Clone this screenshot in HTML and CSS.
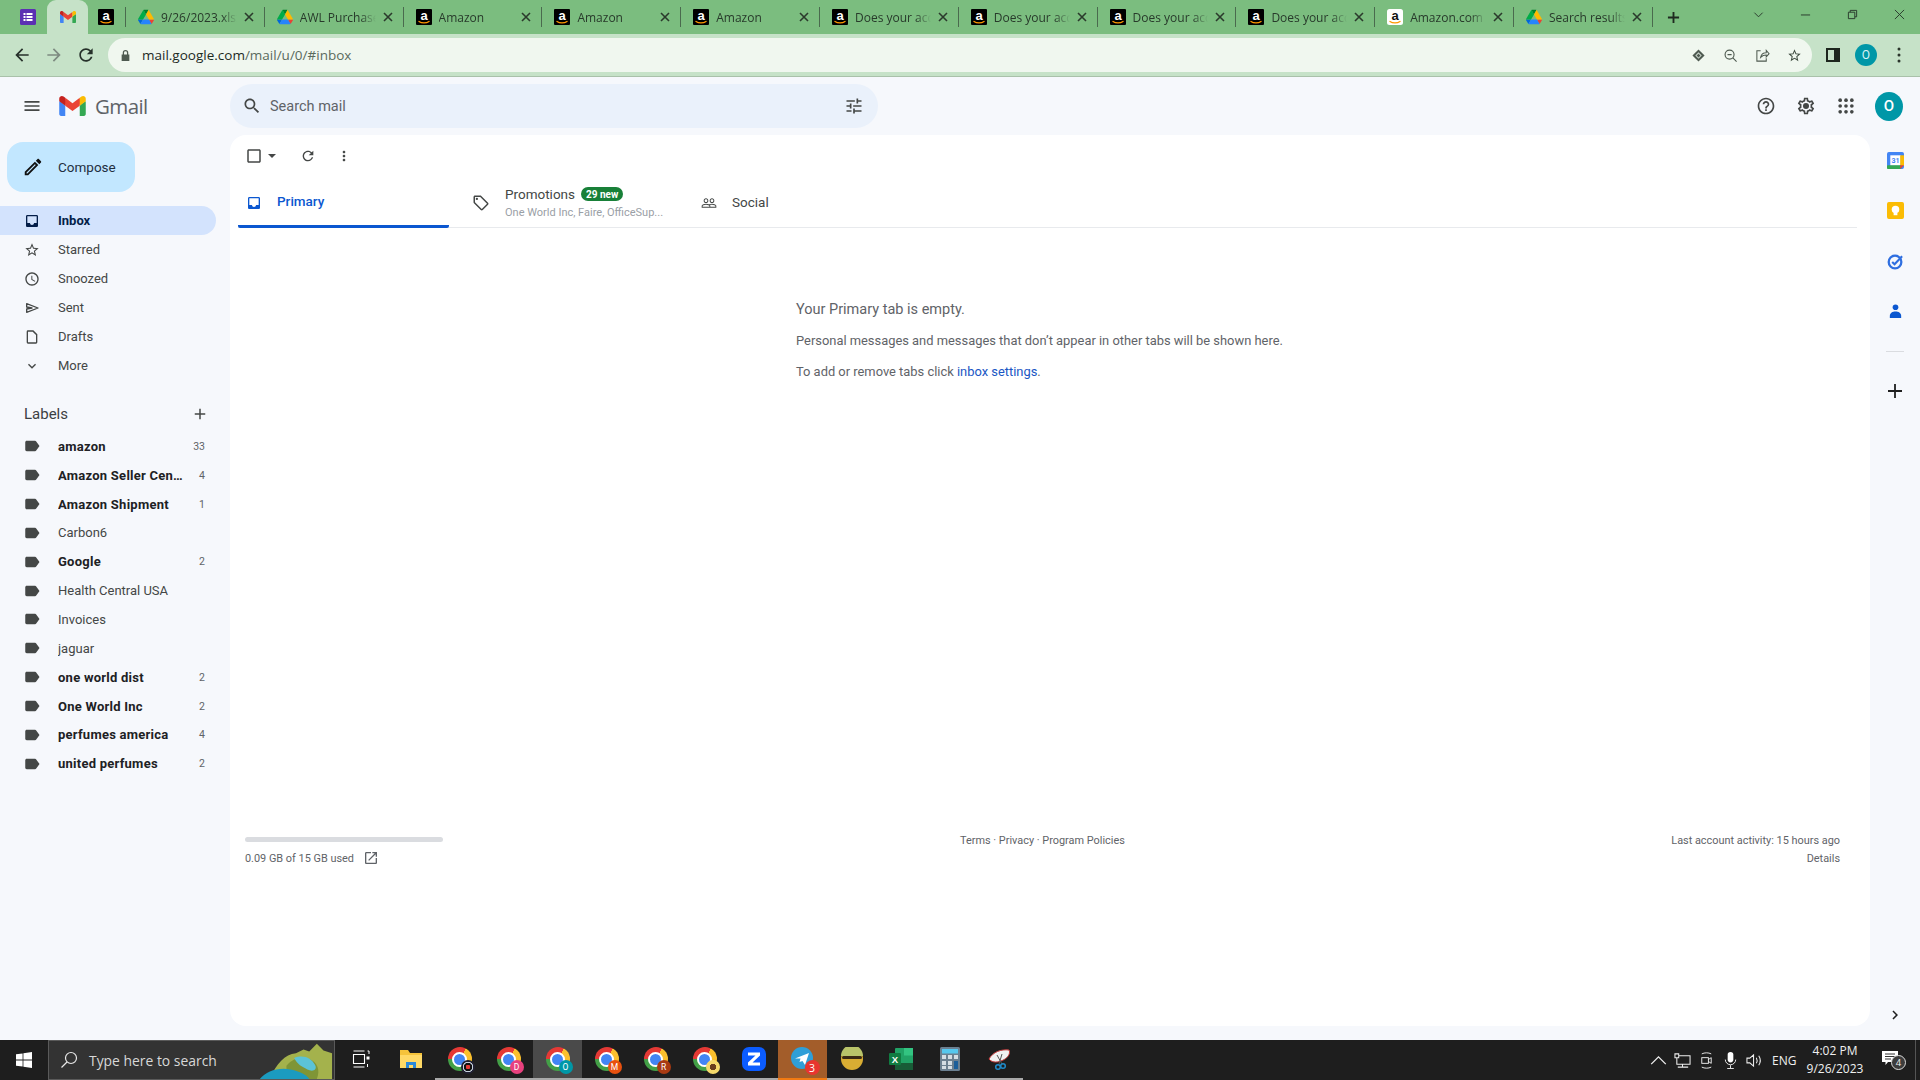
FILE: index.html
```html
<!DOCTYPE html>
<html lang="en">
<head>
<meta charset="utf-8">
<title>Inbox - Gmail</title>
<link rel="stylesheet" href="styles.css">
</head>
<body>
<svg class="defs" width="0" height="0" aria-hidden="true">
  <symbol id="amazon" viewBox="0 0 16 16"><rect width="16" height="16" rx="1" fill="#000"/><text x="8" y="10.5" text-anchor="middle" font-family="Liberation Sans, sans-serif" font-weight="700" font-size="13" fill="#fff">a</text><path d="M2.5 12.2c3.5 2.2 7.5 2.2 11 0" fill="none" stroke="#f90" stroke-width="1.3"/></symbol>
  <symbol id="amazonw" viewBox="0 0 16 16"><rect width="16" height="16" rx="2.5" fill="#fff"/><text x="8" y="10.5" text-anchor="middle" font-family="Liberation Sans, sans-serif" font-weight="700" font-size="13" fill="#111">a</text><path d="M2.5 12.2c3.5 2.2 7.5 2.2 11 0" fill="none" stroke="#f90" stroke-width="1.3"/></symbol>
  <symbol id="drive" viewBox="0 0 87.3 78"><path d="M6.6 66.85l3.85 6.65c.8 1.4 1.95 2.5 3.3 3.3L27.5 53H0c0 1.55.4 3.1 1.2 4.5z" fill="#0066da"/><path d="M43.65 25L29.9 1.2c-1.35.8-2.5 1.9-3.3 3.3L1.2 48.5C.4 49.9 0 51.45 0 53h27.5z" fill="#00ac47"/><path d="M73.55 76.8c1.35-.8 2.5-1.9 3.3-3.3l1.6-2.75 7.65-13.25c.8-1.4 1.2-2.95 1.2-4.5H59.798l5.852 11.5z" fill="#ea4335"/><path d="M43.65 25L57.4 1.2C56.05.4 54.5 0 52.9 0H34.4c-1.6 0-3.15.45-4.5 1.2z" fill="#00832d"/><path d="M59.8 53H27.5L13.75 76.8c1.35.8 2.9 1.2 4.5 1.2h50.8c1.6 0 3.15-.45 4.5-1.2z" fill="#2684fc"/><path d="M73.4 26.5l-12.7-22c-.8-1.4-1.95-2.5-3.3-3.3L43.65 25 59.8 53h27.45c0-1.55-.4-3.1-1.2-4.5z" fill="#ffba00"/></symbol>
  <symbol id="gmail" viewBox="0 0 256 193"><path d="M58.18 192.05V93.14L27.5 65.08 0 49.5v125.09c0 9.66 7.83 17.46 17.46 17.46h40.72z" fill="#4285F4"/><path d="M197.82 192.05h40.72c9.66 0 17.46-7.83 17.46-17.46V49.5l-31.15 17.83-27.03 25.81v98.91z" fill="#34A853"/><path d="M58.18 93.14l-4.17-38.65 4.17-36.99L128 69.87l69.82-52.37 4.67 35-4.67 40.64L128 145.5z" fill="#EA4335"/><path d="M197.82 17.5v75.64L256 49.5V26.23c0-21.58-24.64-33.88-41.89-20.94z" fill="#FBBC04"/><path d="M0 49.5l26.76 20.07L58.18 93.14V17.5L41.89 5.29C24.61-7.65 0 4.65 0 26.23z" fill="#C5221F"/></symbol>
  <symbol id="close" viewBox="0 0 10 10"><path d="M1 1l8 8M9 1L1 9" stroke="#2b3a2c" stroke-width="1.6" fill="none"/></symbol>
  <symbol id="label" viewBox="0 0 24 24"><path d="M17.63 5.84C17.27 5.33 16.67 5 16 5L5 5.01C3.9 5.01 3 5.9 3 7v10c0 1.1.9 1.99 2 1.99L16 19c.67 0 1.27-.33 1.63-.84L22 12l-4.37-6.16z"/></symbol>
  <symbol id="inbox" viewBox="0 0 24 24"><path d="M19 3H4.99c-1.11 0-1.98.89-1.98 2L3 19c0 1.1.88 2 1.99 2H19c1.1 0 2-.9 2-2V5c0-1.11-.9-2-2-2zm0 12h-4c0 1.66-1.35 3-3 3s-3-1.34-3-3H4.99V5H19v10z"/></symbol>
</svg>

<div class="tabstrip">
  <svg class="fav" viewBox="0 0 16 16"><rect width="16" height="16" rx="1.5" fill="#5b2fb3"/><path d="M3.5 4h2v2h-2zM3.5 7h2v2h-2zM3.5 10h2v2h-2zM6.5 4h6v2h-6zM6.5 7h6v2h-6zM6.5 10h6v2h-6z" fill="#fff"/></svg>
  <div class="tab-active"><svg class="fav" viewBox="0 0 256 193"><use href="#gmail"/></svg></div>
  <svg class="fav pinned"><use href="#amazon"/></svg>
  <div class="sep"></div>
  <div class="tab"><svg class="fav"><use href="#drive"/></svg><span class="tab-title">9/26/2023.xlsx</span><svg class="tab-x"><use href="#close"/></svg></div>
  <div class="tab"><svg class="fav"><use href="#drive"/></svg><span class="tab-title">AWL Purchase</span><svg class="tab-x"><use href="#close"/></svg></div>
  <div class="tab"><svg class="fav"><use href="#amazon"/></svg><span class="tab-title">Amazon</span><svg class="tab-x"><use href="#close"/></svg></div>
  <div class="tab"><svg class="fav"><use href="#amazon"/></svg><span class="tab-title">Amazon</span><svg class="tab-x"><use href="#close"/></svg></div>
  <div class="tab"><svg class="fav"><use href="#amazon"/></svg><span class="tab-title">Amazon</span><svg class="tab-x"><use href="#close"/></svg></div>
  <div class="tab"><svg class="fav"><use href="#amazon"/></svg><span class="tab-title">Does your account</span><svg class="tab-x"><use href="#close"/></svg></div>
  <div class="tab"><svg class="fav"><use href="#amazon"/></svg><span class="tab-title">Does your account</span><svg class="tab-x"><use href="#close"/></svg></div>
  <div class="tab"><svg class="fav"><use href="#amazon"/></svg><span class="tab-title">Does your account</span><svg class="tab-x"><use href="#close"/></svg></div>
  <div class="tab"><svg class="fav"><use href="#amazon"/></svg><span class="tab-title">Does your account</span><svg class="tab-x"><use href="#close"/></svg></div>
  <div class="tab"><svg class="fav"><use href="#amazonw"/></svg><span class="tab-title">Amazon.com : shop</span><svg class="tab-x"><use href="#close"/></svg></div>
  <div class="tab"><svg class="fav"><use href="#drive"/></svg><span class="tab-title">Search results</span><svg class="tab-x"><use href="#close"/></svg></div>
  <svg class="newtab" viewBox="0 0 14 14"><path d="M7 1v12M1 7h12" stroke="#1f2a20" stroke-width="2"/></svg>
  <div class="winctl">
    <svg class="win-ic" viewBox="0 0 12 12"><path d="M1.5 4L6 8.5 10.5 4" fill="none" stroke="#26342a" stroke-width="1"/></svg>
    <svg class="win-ic" viewBox="0 0 12 12"><path d="M1 6.5h10" stroke="#26342a" stroke-width="1"/></svg>
    <svg class="win-ic" viewBox="0 0 12 12"><path d="M1.5 3.5h7v7h-7zM3.5 3.5v-2h7v7h-2" fill="none" stroke="#26342a" stroke-width="1"/></svg>
    <svg class="win-ic" viewBox="0 0 12 12"><path d="M1 1l10 10M11 1L1 11" stroke="#26342a" stroke-width="1"/></svg>
  </div>
</div>

<div class="toolbar">
  <svg class="nav-ic" viewBox="0 0 24 24"><path d="M20 11H7.83l5.59-5.59L12 4l-8 8 8 8 1.41-1.41L7.83 13H20z" fill="#26302a"/></svg>
  <svg class="nav-ic" viewBox="0 0 24 24"><path d="M12 4l-1.41 1.41L16.17 11H4v2h12.17l-5.58 5.59L12 20l8-8z" fill="#7d8a80"/></svg>
  <svg class="nav-ic" viewBox="0 0 24 24"><path d="M17.65 6.35C16.2 4.9 14.21 4 12 4c-4.42 0-7.99 3.58-7.99 8s3.57 8 7.99 8c3.73 0 6.84-2.55 7.73-6h-2.08c-.82 2.33-3.04 4-5.65 4-3.31 0-6-2.69-6-6s2.69-6 6-6c1.66 0 3.14.69 4.22 1.78L13 11h7V4l-2.35 2.35z" fill="#26302a"/></svg>
  <div class="omnibox">
    <svg class="lock" viewBox="0 0 12 14"><path d="M3 6V4a3 3 0 0 1 6 0v2h1.2v7H1.8V6zm1.4 0h3.2V4a1.6 1.6 0 0 0-3.2 0z" fill="#4e5a50"/></svg>
    <span class="url"><span class="url-host">mail.google.com</span>/mail/u/0/#inbox</span>
    <div class="omni-actions">
      <svg class="omni-ic" viewBox="0 0 16 16"><path d="M8 1.500L14.500 8 8 14.500 1.500 8z" fill="#4e5a50"/><path d="M8 4.500L11.500 8 8 11.500 4.500 8z" fill="#c9d3ca"/><path d="M8 6l2 2-2 2-2-2z" fill="#4e5a50"/></svg>
      <svg class="omni-ic" viewBox="0 0 16 16"><circle cx="7" cy="7" r="4.8" fill="none" stroke="#4e5a50" stroke-width="1.2"/><path d="M10.5 10.5L14.5 14.5M4.8 7h4.4" stroke="#4e5a50" stroke-width="1.2"/></svg>
      <svg class="omni-ic" viewBox="0 0 16 16"><path d="M6 3H2v11h10v-3M6 10c.5-3 3-5 6-5V2.5L15 6l-3 3.500V7.500c-2.500 0-4.500 1-6 2.500z" fill="none" stroke="#4e5a50" stroke-width="1.100"/></svg>
      <svg class="omni-ic" viewBox="0 0 24 24"><path d="M22 9.24l-7.19-.62L12 2 9.19 8.63 2 9.24l5.46 4.73L5.82 21 12 17.27 18.18 21l-1.63-7.03L22 9.24zM12 15.4l-3.760 2.270 1-4.280-3.320-2.880 4.380-.38L12 6.100l1.710 4.040 4.380.38-3.320 2.880 1 4.280L12 15.400z" fill="#3c4a3e"/></svg>
    </div>
  </div>
  <div class="toolbar-end">
    <svg class="panel-ic" viewBox="0 0 14 14"><path d="M0 0h14v14H0zM2 2v10h6V2z" fill="#1d261e"/></svg>
    <div class="chrome-avatar">O</div>
    <svg class="menu-ic" viewBox="0 0 4 16"><circle cx="2" cy="2" r="1.500" fill="#2b352c"/><circle cx="2" cy="8" r="1.500" fill="#2b352c"/><circle cx="2" cy="14" r="1.500" fill="#2b352c"/></svg>
  </div>
</div>

<div class="app">
  <header class="gm-header">
    <div class="gm-brand">
      <svg class="ic20 hamburger" viewBox="0 0 24 24"><path d="M3 18h18v-2H3v2zm0-5h18v-2H3v2zm0-7v2h18V6H3z"/></svg>
      <svg class="gm-logo"><use href="#gmail"/></svg>
      <span class="gm-word">Gmail</span>
    </div>
    <div class="gm-search">
      <svg class="ic20" viewBox="0 0 24 24"><path d="M15.500 14h-.79l-.28-.27C15.410 12.590 16 11.110 16 9.500 16 5.910 13.090 3 9.500 3S3 5.910 3 9.500 5.910 16 9.500 16c1.610 0 3.090-.59 4.230-1.570l.27.28v.79l5 4.990L20.490 19l-4.990-5zm-6 0C7.010 14 5 11.990 5 9.500S7.010 5 9.500 5 14 7.010 14 9.500 11.990 14 9.500 14z"/></svg>
      <span class="gm-search-text">Search mail</span>
      <svg class="ic20 tune" viewBox="0 0 24 24"><path d="M3 17v2h6v-2H3zM3 5v2h10V5H3zm10 16v-2h8v-2h-8v-2h-2v6h2zM7 9v2H3v2h4v2h2V9H7zm14 4v-2H11v2h10zm-6-4h2V7h4V5h-4V3h-2v6z"/></svg>
    </div>
    <div class="gm-actions">
      <svg class="ic20" viewBox="0 0 24 24"><path d="M11 18h2v-2h-2v2zm1-16C6.480 2 2 6.480 2 12s4.480 10 10 10 10-4.480 10-10S17.520 2 12 2zm0 18c-4.410 0-8-3.590-8-8s3.590-8 8-8 8 3.590 8 8-3.590 8-8 8zm0-14c-2.210 0-4 1.790-4 4h2c0-1.100.9-2 2-2s2 .9 2 2c0 2-3 1.750-3 5h2c0-2.250 3-2.500 3-5 0-2.210-1.790-4-4-4z"/></svg>
      <svg class="ic20" viewBox="0 0 24 24"><path d="M19.430 12.980c.04-.32.07-.64.07-.98 0-.34-.03-.66-.07-.98l2.110-1.650c.19-.15.24-.42.12-.64l-2-3.460c-.09-.16-.26-.25-.44-.25-.06 0-.12.01-.17.03l-2.490 1c-.52-.4-1.080-.73-1.690-.98l-.38-2.650C14.460 2.180 14.250 2 14 2h-4c-.25 0-.46.18-.49.42l-.38 2.650c-.61.25-1.170.59-1.690.98l-2.490-1c-.06-.02-.12-.03-.18-.03-.17 0-.34.09-.43.25l-2 3.460c-.13.22-.07.49.12.64l2.110 1.650c-.04.32-.07.65-.07.98 0 .33.03.66.07.98l-2.110 1.650c-.19.15-.24.42-.12.64l2 3.460c.09.16.26.25.44.25.06 0 .12-.01.17-.03l2.490-1c.52.4 1.080.73 1.690.98l.38 2.650c.03.24.24.42.49.42h4c.25 0 .46-.18.49-.42l.38-2.650c.61-.25 1.170-.59 1.690-.98l2.490 1c.06.02.12.03.18.03.17 0 .34-.09.43-.25l2-3.460c.12-.22.07-.49-.12-.64l-2.110-1.650zm-1.980-1.710c.04.31.05.52.05.73 0 .21-.02.43-.05.73l-.14 1.130.89.7 1.080.84-.7 1.210-1.270-.51-1.040-.42-.9.68c-.43.32-.84.56-1.250.73l-1.060.43-.16 1.130-.2 1.350h-1.400l-.19-1.350-.16-1.130-1.060-.43c-.43-.18-.83-.41-1.230-.71l-.91-.7-1.060.43-1.270.51-.7-1.210 1.080-.84.89-.7-.14-1.130c-.03-.31-.05-.54-.05-.74s.02-.43.05-.73l.14-1.130-.89-.7-1.080-.84.7-1.210 1.270.51 1.040.42.9-.68c.43-.32.84-.56 1.250-.73l1.060-.43.16-1.130.2-1.350h1.390l.19 1.350.16 1.130 1.060.43c.43.18.83.41 1.230.71l.91.7 1.060-.43 1.270-.51.7 1.210-1.070.85-.89.7.14 1.130z"/><circle cx="12" cy="12" r="3.600"/></svg>
      <svg class="ic20" viewBox="0 0 24 24"><circle cx="5" cy="5" r="2.200"/><circle cx="12" cy="5" r="2.200"/><circle cx="19" cy="5" r="2.200"/><circle cx="5" cy="12" r="2.200"/><circle cx="12" cy="12" r="2.200"/><circle cx="19" cy="12" r="2.200"/><circle cx="5" cy="19" r="2.200"/><circle cx="12" cy="19" r="2.200"/><circle cx="19" cy="19" r="2.200"/></svg>
      <div class="gm-avatar">O</div>
    </div>
  </header>

  <div class="gm-body">
    <aside class="sidebar">
      <div class="compose">
        <svg class="ic20 compose-ic" viewBox="0 0 24 24"><path d="M3 17.250V21h3.750L17.810 9.940l-3.750-3.750L3 17.250zM5.920 19H5v-.92l9.060-9.060.92.92L5.920 19zM20.710 5.630l-2.340-2.340c-.39-.39-1.020-.39-1.410 0l-1.830 1.830 3.750 3.750 1.830-1.830c.39-.39.39-1.020 0-1.410z"/></svg>
        <span>Compose</span>
      </div>
      <nav class="nav">
        <div class="nav-row nav-active"><svg class="ic16"><use href="#inbox"/></svg><span>Inbox</span></div>
        <div class="nav-row"><svg class="ic16" viewBox="0 0 24 24"><path d="M22 9.240l-7.190-.62L12 2 9.190 8.630 2 9.240l5.460 4.730L5.820 21 12 17.270 18.180 21l-1.630-7.030L22 9.240zM12 15.400l-3.760 2.270 1-4.280-3.320-2.880 4.380-.38L12 6.100l1.710 4.040 4.380.38-3.320 2.880 1 4.280L12 15.400z"/></svg><span>Starred</span></div>
        <div class="nav-row"><svg class="ic16" viewBox="0 0 24 24"><path d="M11.990 2C6.470 2 2 6.480 2 12s4.470 10 9.990 10C17.520 22 22 17.520 22 12S17.520 2 11.990 2zM12 20c-4.420 0-8-3.580-8-8s3.580-8 8-8 8 3.580 8 8-3.580 8-8 8zm.5-13H11v6l5.250 3.150.75-1.230-4.500-2.670z"/></svg><span>Snoozed</span></div>
        <div class="nav-row"><svg class="ic16" viewBox="0 0 24 24"><path d="M4 5.500L21 12 4 18.500V13.500l8-1.500-8-1.500z" fill="none" stroke="#444746" stroke-width="2" stroke-linejoin="round"/></svg><span>Sent</span></div>
        <div class="nav-row"><svg class="ic16" viewBox="0 0 24 24"><path d="M14 2H6a2 2 0 0 0-2 2v16a2 2 0 0 0 2 2h12a2 2 0 0 0 2-2V8l-6-6zm4 18H6V4h7l5 5v11z"/></svg><span>Drafts</span></div>
        <div class="nav-row"><svg class="ic16" viewBox="0 0 24 24"><path d="M16.590 8.590L12 13.170 7.410 8.590 6 10l6 6 6-6z"/></svg><span>More</span></div>
      </nav>
      <div class="labels-head"><span>Labels</span><svg class="ic18" viewBox="0 0 24 24"><path d="M19 13h-6v6h-2v-6H5v-2h6V5h2v6h6v2z"/></svg></div>
      <ul class="labels">
        <li class="label-row strong"><svg class="ic18"><use href="#label"/></svg><span class="label-name">amazon</span><span class="count">33</span></li>
        <li class="label-row strong"><svg class="ic18"><use href="#label"/></svg><span class="label-name">Amazon Seller Central</span><span class="count">4</span></li>
        <li class="label-row strong"><svg class="ic18"><use href="#label"/></svg><span class="label-name">Amazon Shipment</span><span class="count">1</span></li>
        <li class="label-row"><svg class="ic18"><use href="#label"/></svg><span class="label-name">Carbon6</span><span class="count"></span></li>
        <li class="label-row strong"><svg class="ic18"><use href="#label"/></svg><span class="label-name">Google</span><span class="count">2</span></li>
        <li class="label-row"><svg class="ic18"><use href="#label"/></svg><span class="label-name">Health Central USA</span><span class="count"></span></li>
        <li class="label-row"><svg class="ic18"><use href="#label"/></svg><span class="label-name">Invoices</span><span class="count"></span></li>
        <li class="label-row"><svg class="ic18"><use href="#label"/></svg><span class="label-name">jaguar</span><span class="count"></span></li>
        <li class="label-row strong"><svg class="ic18"><use href="#label"/></svg><span class="label-name">one world dist</span><span class="count">2</span></li>
        <li class="label-row strong"><svg class="ic18"><use href="#label"/></svg><span class="label-name">One World Inc</span><span class="count">2</span></li>
        <li class="label-row strong"><svg class="ic18"><use href="#label"/></svg><span class="label-name">perfumes america</span><span class="count">4</span></li>
        <li class="label-row strong"><svg class="ic18"><use href="#label"/></svg><span class="label-name">united perfumes</span><span class="count">2</span></li>
      </ul>
    </aside>

    <main class="card">
      <div class="mail-tools">
        <svg class="ic18 check" viewBox="0 0 24 24"><path d="M19 5v14H5V5h14m0-2H5c-1.100 0-2 .9-2 2v14c0 1.100.9 2 2 2h14c1.100 0 2-.9 2-2V5c0-1.100-.9-2-2-2z"/></svg>
        <svg class="caret" viewBox="0 0 8 4"><path d="M0 0h8L4 4z"/></svg>
        <svg class="ic16 refresh" viewBox="0 0 24 24"><path d="M17.650 6.350C16.200 4.900 14.210 4 12 4c-4.420 0-7.990 3.580-7.990 8s3.570 8 7.990 8c3.730 0 6.840-2.550 7.730-6h-2.080c-.82 2.330-3.040 4-5.650 4-3.310 0-6-2.690-6-6s2.690-6 6-6c1.660 0 3.140.69 4.220 1.780L13 11h7V4l-2.350 2.350z"/></svg>
        <svg class="ic16 more" viewBox="0 0 24 24"><path d="M12 8c1.100 0 2-.9 2-2s-.9-2-2-2-2 .9-2 2 .9 2 2 2zm0 2c-1.100 0-2 .9-2 2s.9 2 2 2 2-.9 2-2-.9-2-2-2zm0 6c-1.100 0-2 .9-2 2s.9 2 2 2 2-.9 2-2-.9-2-2-2z"/></svg>
      </div>
      <div class="cat-tabs">
        <div class="cat cat-primary"><svg class="ic16"><use href="#inbox"/></svg><span>Primary</span></div>
        <div class="cat cat-promo">
          <svg class="ic18" viewBox="0 0 24 24"><path d="M21.410 11.580l-9-9C12.050 2.220 11.550 2 11 2H4c-1.100 0-2 .9-2 2v7c0 .55.22 1.050.59 1.420l9 9c.36.36.86.58 1.410.58s1.050-.22 1.410-.59l7-7c.37-.36.59-.86.59-1.410s-.23-1.060-.59-1.420zM13 20.010L4 11V4h7v-.01l9 9-7 7.020z"/><circle cx="6.500" cy="6.500" r="1.500"/></svg>
          <div class="promo-text">
            <div class="promo-top"><span>Promotions</span><span class="badge">29 new</span></div>
            <div class="promo-sub">One World Inc, Faire, OfficeSup...</div>
          </div>
        </div>
        <div class="cat cat-social"><svg class="ic16" viewBox="0 0 24 24"><path d="M16.500 13c-1.200 0-3.070.34-4.500 1-1.430-.67-3.300-1-4.500-1C5.330 13 1 14.080 1 16.250V19h22v-2.750c0-2.170-4.330-3.250-6.500-3.250zm-4 4.500h-10v-1.250c0-.54 2.560-1.750 5-1.750s5 1.210 5 1.750v1.250zm9 0H14v-1.250c0-.46-.2-.86-.52-1.220.88-.3 1.960-.53 3.020-.53 2.440 0 5 1.210 5 1.750v1.250zM7.500 12c1.930 0 3.500-1.570 3.500-3.500S9.430 5 7.500 5 4 6.570 4 8.500 5.570 12 7.500 12zm0-5.500c1.100 0 2 .9 2 2s-.9 2-2 2-2-.9-2-2 .9-2 2-2zm9 5.500c1.930 0 3.500-1.570 3.500-3.500S18.430 5 16.500 5 13 6.570 13 8.500s1.570 3.500 3.500 3.500zm0-5.500c1.100 0 2 .9 2 2s-.9 2-2 2-2-.9-2-2 .9-2 2-2z"/></svg><span class="social-text">Social</span></div>
      </div>
      <section class="empty">
        <h2 class="empty-title">Your Primary tab is empty.</h2>
        <p class="empty-line">Personal messages and messages that don’t appear in other tabs will be shown here.</p>
        <p class="empty-line">To add or remove tabs click <a class="empty-link">inbox settings</a>.</p>
      </section>
      <footer class="mail-foot">
        <div class="foot-left">
          <div class="storage-bar"></div>
          <div class="storage-text"><span>0.09 GB of 15 GB used</span><svg class="ic14" viewBox="0 0 24 24"><path d="M19 19H5V5h7V3H5c-1.110 0-2 .9-2 2v14c0 1.100.89 2 2 2h14c1.100 0 2-.9 2-2v-7h-2v7zM14 3v2h3.590l-9.830 9.830 1.410 1.410L19 6.410V10h2V3h-7z"/></svg></div>
        </div>
        <div class="foot-center">Terms · Privacy · Program Policies</div>
        <div class="foot-right"><div>Last account activity: 15 hours ago</div><div class="foot-details">Details</div></div>
      </footer>
    </main>

    <aside class="rail">
      <div class="rail-item"><svg class="rail-ic" viewBox="0 0 18 18"><rect width="18" height="18" rx="2" fill="#4285f4"/><rect x="3.500" y="3.500" width="11" height="11" fill="#fff"/><rect x="14" y="3.500" width="4" height="11" fill="#fbbc04"/><rect y="14" width="15" height="4" rx="1" fill="#34a853"/><path d="M14 14h4l-4 4z" fill="#ea4335"/><text x="9" y="12" text-anchor="middle" font-family="Roboto, sans-serif" font-size="7.500" font-weight="700" fill="#4285f4">31</text></svg></div>
      <div class="rail-item"><svg class="rail-ic" viewBox="0 0 18 18"><rect width="18" height="18" rx="2" fill="#fbbc04"/><circle cx="9" cy="8" r="4" fill="#fff"/><rect x="7" y="11.500" width="4" height="2.500" fill="#fff"/></svg></div>
      <div class="rail-item"><svg class="rail-ic" viewBox="0 0 18 18"><circle cx="8.500" cy="9.500" r="6.700" fill="none" stroke="#2f6fe0" stroke-width="2.400"/><path d="M5.500 9.500l2.500 2.500L16 3.500" fill="none" stroke="#2f6fe0" stroke-width="2.200"/></svg></div>
      <div class="rail-item"><svg class="rail-ic" viewBox="0 0 18 18"><circle cx="9" cy="4.500" r="3" fill="#0b57d0"/><path d="M3 16v-2.500C3 10.500 6 9 9 9s6 1.500 6 4.500V16z" fill="#0b57d0"/></svg></div>
      <div class="rail-line"></div>
      <svg class="rail-plus" viewBox="0 0 14 14"><path d="M7 0v14M0 7h14" stroke="#1f1f1f" stroke-width="1.800"/></svg>
      <svg class="rail-chevron" viewBox="0 0 24 24"><path d="M10 6L8.590 7.410 13.170 12l-4.580 4.590L10 18l6-6z"/></svg>
    </aside>
  </div>
</div>

<div class="taskbar">
  <div class="start"><svg class="win-logo" viewBox="0 0 16 16"><path d="M0 2.300l6.600-.9v6.200H0zM7.400 1.300L16 0v7.600H7.400zM0 8.400h6.600v6.200L0 13.700zM7.400 8.400H16V16l-8.600-1.300z" fill="#fff"/></svg></div>
  <div class="tb-search">
    <svg class="tb-mag" viewBox="0 0 18 18"><circle cx="11" cy="7" r="5.500" fill="none" stroke="#e8e8e8" stroke-width="1.200"/><path d="M7 11L1.500 16.500" stroke="#e8e8e8" stroke-width="1.200"/></svg>
    <span class="tb-search-text">Type here to search</span>
    <svg class="tb-scene" viewBox="0 0 78 40"><path d="M12 40C20 24 28 14 40 13l8-4 6 2 8-8 7 7 9 3v27z" fill="#a4b24c"/><path d="M30 26c8-10 20-10 26-6 6 3 10 10 6 20H30z" fill="#7f9536"/><path d="M38 18c10-4 18 0 22 7 3 5-2 8-8 5-6-3-10-5-14-12z" fill="#5cc3d6"/><path d="M2 40c8-10 24-14 40-8 8 3 10 5 12 8z" fill="#1b9bc0"/></svg>
  </div>
  <div class="tb-item tb-view"><svg class="tb-ic" viewBox="0 0 18 18"><path d="M1.500 1h11M1.500 17h11M1.500 4.500h11v9h-11z" fill="none" stroke="#fff" stroke-width="1.100"/><rect x="14.500" y="6.500" width="3" height="3" fill="#fff"/><path d="M15.500 1h1.500v3M15.500 14v3" stroke="#fff" fill="none"/></svg></div>
  <div class="tb-item"><svg class="tb-ic tb-big" viewBox="0 0 24 24"><path d="M1 3h8l2 3h12v15H1z" fill="#f5c33b"/><path d="M1 8h22v13H1z" fill="#ffd966"/><path d="M7 21v-6h10v6h-3v-3h-4v3z" fill="#2b88d8"/></svg></div>
  <div class="tb-item tb-open"><div class="chrome"><div class="chrome-core"></div><span class="chip chip-cam"></span></div></div>
  <div class="tb-item tb-open"><div class="chrome"><div class="chrome-core"></div><span class="chip chip-d">D</span></div></div>
  <div class="tb-item tb-open tb-current"><div class="chrome"><div class="chrome-core"></div><span class="chip chip-o">O</span></div></div>
  <div class="tb-item tb-open"><div class="chrome"><div class="chrome-core"></div><span class="chip chip-m">M</span></div></div>
  <div class="tb-item tb-open"><div class="chrome"><div class="chrome-core"></div><span class="chip chip-r">R</span></div></div>
  <div class="tb-item tb-open"><div class="chrome"><div class="chrome-core"></div><span class="chip chip-y"></span></div></div>
  <div class="tb-item tb-open"><svg class="tb-ic tb-big" viewBox="0 0 24 24"><rect width="24" height="24" rx="7" fill="#0b5cff"/><path d="M6 5.500h12v3l-7.500 7H18v3H6v-3l7.500-7H6z" fill="#fff"/></svg></div>
  <div class="tb-item tb-alert"><div class="tg"><svg class="tb-ic tb-big" viewBox="0 0 24 24"><circle cx="11" cy="11" r="11" fill="#2f9fd8"/><path d="M4 11.500L18 6l-4 12-2.500-4-3 1 1-3.500z" fill="#fff"/></svg><span class="tg-badge">3</span></div></div>
  <div class="tb-item tb-open"><svg class="tb-ic tb-big" viewBox="0 0 24 24"><circle cx="12" cy="12" r="11" fill="#d9ad33"/><path d="M1 9a11 11 0 0 1 22 0z" fill="#b9c46a"/><rect x="2" y="9" width="20" height="3" rx="1.500" fill="#3a2a14"/></svg></div>
  <div class="tb-item tb-open"><svg class="tb-ic tb-big" viewBox="0 0 24 24"><rect x="6" y="1" width="18" height="22" rx="1" fill="#21a366"/><rect x="15" y="1" width="9" height="7.500" fill="#33c481"/><rect x="6" y="16" width="18" height="7" fill="#185c37"/><rect y="6" width="12" height="12" rx="1" fill="#107c41"/><text x="6" y="15.500" text-anchor="middle" font-family="Liberation Sans, sans-serif" font-weight="700" font-size="9.500" fill="#fff">X</text></svg></div>
  <div class="tb-item tb-open"><svg class="tb-ic tb-big" viewBox="0 0 20 24"><rect width="20" height="24" rx="1.500" fill="#6b7f90"/><rect x="2" y="2" width="16" height="4.500" fill="#56c7ee"/><path d="M2 8h4v4H2zM8 8h4v4H8zM14 8h4v4h-4zM2 14h4v4H2zM8 14h4v4H8zM2 19h4v3H2zM8 19h4v3H8z" fill="#d4dde4"/><rect x="14" y="14" width="4" height="8" fill="#1c5e9a"/></svg></div>
  <div class="tb-item tb-open"><svg class="tb-ic tb-big" viewBox="0 0 24 24"><path d="M2 12C6 5 14 2 22 3c2 4-2 9-8 11-5 2-10 1-12-2z" fill="#f1f1f1" stroke="#c43a3a" stroke-width="1"/><path d="M10 8l5 9M15 7l-3 10" stroke="#555" stroke-width="1"/><circle cx="16" cy="19" r="2.300" fill="none" stroke="#1f8ac9" stroke-width="1.500"/><circle cx="11" cy="20" r="2.300" fill="none" stroke="#1f8ac9" stroke-width="1.500"/></svg></div>
  <div class="tray">
    <svg class="tray-ic" viewBox="0 0 14 14"><path d="M1 10l6-6 6 6" fill="none" stroke="#eee" stroke-width="1.100"/></svg>
    <svg class="tray-ic" viewBox="0 0 18 16"><path d="M1 1h4v4H1zM5 3h12v9H3V5M9 12v3M4 15h11" fill="none" stroke="#eee" stroke-width="1.100"/></svg>
    <svg class="tray-ic" viewBox="0 0 16 18"><rect x="3" y="6" width="7" height="6" fill="none" stroke="#eee"/><path d="M10 8l3-2v6l-3-2M3 2c3-1.500 7-1.500 10 0M3 16c3 1.500 7 1.500 10 0" fill="none" stroke="#eee"/></svg>
    <svg class="tray-ic" viewBox="0 0 14 18"><rect x="4" y="0" width="6" height="11" rx="3" fill="#fff"/><path d="M1.500 8a5.500 5.500 0 0 0 11 0M7 14v3M3.500 17.500h7" fill="none" stroke="#eee"/></svg>
    <svg class="tray-ic" viewBox="0 0 18 16"><path d="M1 5.500h3L8 2v12L4 10.500H1zM11 5c1 2 1 4 0 6M13.500 3c2 3 2 7 0 10" fill="none" stroke="#eee" stroke-width="1.100"/></svg>
    <span class="tray-lang">ENG</span>
    <div class="tray-clock"><div>4:02 PM</div><div>9/26/2023</div></div>
    <div class="tray-note"><svg class="note-ic" viewBox="0 0 16 14"><path d="M0 0h16v11H6l-2.500 3V11H0z" fill="#fff"/><path d="M3 3h10M3 5.500h10M3 8h6" stroke="#333"/></svg><span class="note-count">4</span></div>
    <div class="show-desk"></div>
  </div>
</div>
</body>
</html>
```

FILE: styles.css
```css
* { box-sizing: border-box; }
html, body { height: 100%; }
body {
  margin: 0;
  width: 1920px;
  height: 1080px;
  overflow: hidden;
  display: flex;
  flex-direction: column;
  background: #f6f8fc;
  font-family: Roboto, "Liberation Sans", sans-serif;
  color: #1f1f1f;
}
.defs { position: absolute; }
svg { display: block; flex: none; }
.fav { width: 16px; height: 16px; }

/* Browser tab strip */
.tabstrip {
  height: 34px;
  flex: none;
  display: flex;
  align-items: center;
  padding-left: 20px;
  background: #7bbd7f;
  font-family: "Open Sans", "Noto Sans", sans-serif;
  font-size: 12px;
  color: #283a2b;
}
.tab-active {
  height: 34px;
  width: 41px;
  margin-left: 11px;
  display: flex;
  align-items: center;
  justify-content: center;
  background: #c6e2c8;
  border-radius: 9px 9px 0 0;
}
.pinned { margin-left: 10px; }
.sep { width: 1px; height: 20px; margin-left: 11px; background: #4a6a4e; }
.tab {
  width: 138.8px;
  height: 20px;
  display: flex;
  align-items: center;
  padding: 0 10px 0 12px;
  border-right: 1px solid #4a6a4e;
}
.tab-title {
  flex: 1;
  min-width: 0;
  margin-left: 7px;
  white-space: nowrap;
  overflow: hidden;
  -webkit-mask-image: linear-gradient(90deg, #000 80%, transparent);
  mask-image: linear-gradient(90deg, #000 80%, transparent);
}
.tab-x { width: 10px; height: 10px; margin-left: 7px; }
.newtab { width: 13px; height: 13px; margin-left: 14px; }
.winctl { margin-left: auto; display: flex; align-items: center; margin-bottom: 6px; }
.win-ic { width: 11px; height: 11px; margin-right: 36px; }
.win-ic:last-child { margin-right: 15px; }

/* Browser toolbar */
.toolbar {
  height: 43px;
  flex: none;
  display: flex;
  align-items: center;
  padding-left: 12px;
  background: #c6e2c8;
  border-bottom: 1px solid #a9c1aa;
}
.nav-ic { width: 20px; height: 20px; margin-right: 12px; }
.omnibox {
  width: 1704px;
  height: 34px;
  flex: none;
  display: flex;
  align-items: center;
  padding: 0 10px 0 12px;
  background: #f0f7ef;
  border-radius: 17px;
}
.lock { width: 11px; height: 13px; }
.url { margin-left: 11px; font-family: "Open Sans", "Noto Sans", sans-serif; font-size: 13.500px; color: #5a6a5d; }
.url-host { color: #1d2a1f; }
.omni-actions { margin-left: auto; display: flex; gap: 17px; }
.omni-ic { width: 15px; height: 15px; }
.toolbar-end { flex: 1; display: flex; align-items: center; padding-left: 14px; }
.panel-ic { width: 14px; height: 14px; }
.chrome-avatar {
  width: 22px;
  height: 22px;
  margin-left: 15px;
  border-radius: 50%;
  background: #0097a7;
  color: #d8f2f5;
  font-size: 12px;
  display: flex;
  align-items: center;
  justify-content: center;
}
.menu-ic { width: 4px; height: 16px; margin-left: 20px; }

/* Gmail shell */
.app { flex: 1; min-height: 0; display: flex; flex-direction: column; }
.gm-header { height: 58px; flex: none; display: flex; align-items: center; }
.gm-brand { width: 230px; flex: none; display: flex; align-items: center; padding-left: 22px; }
.ic20 { width: 20px; height: 20px; fill: #444746; }
.ic18 { width: 18px; height: 18px; fill: #444746; }
.ic16 { width: 16px; height: 16px; fill: #444746; }
.ic14 { width: 16px; height: 16px; fill: #5f6368; }
.gm-logo { width: 27px; height: 20px; margin-left: 17px; }
.gm-word { margin-left: 9px; font-family: "Open Sans", sans-serif; font-size: 20.500px; letter-spacing: -0.6px; color: #5f6368; }
.gm-search {
  width: 648px;
  height: 44px;
  display: flex;
  align-items: center;
  padding: 0 14px 0 12px;
  background: #eaf1fb;
  border-radius: 22px;
}
.gm-search-text { margin-left: 8px; font-size: 14.500px; color: #5f6368; }
.tune { margin-left: auto; }
.gm-actions { margin-left: auto; display: flex; align-items: center; gap: 20px; padding-right: 17px; }
.gm-avatar {
  width: 28px;
  height: 29px;
  margin-left: -1px;
  border-radius: 50%;
  background: #0097a7;
  color: #fff;
  font-size: 15px;
  font-weight: 500;
  display: flex;
  align-items: center;
  justify-content: center;
}
.gm-body { flex: 1; min-height: 0; display: flex; }

/* Sidebar */
.sidebar { width: 230px; flex: none; font-size: 13px; color: #444746; }
.compose {
  width: 128px;
  height: 50px;
  margin: 7px 0 14px 7px;
  display: flex;
  align-items: center;
  padding-left: 15px;
  padding-bottom: 1px;
  background: #c2e7ff;
  border-radius: 16px;
  color: #1f2f3f;
  font-size: 13.500px;
  font-weight: 400;
  gap: 16px;
}
.compose-ic { fill: #111; width: 22px; height: 22px; margin-right: -2px; }
.nav { width: 216px; }
.nav-row {
  height: 29px;
  display: flex;
  align-items: center;
  padding-left: 24px;
  gap: 18px;
  border-radius: 0 15px 15px 0;
}
.nav-active { background: #d3e3fd; color: #041e49; font-weight: 700; }
.nav-active svg { fill: #041e49; }
.labels-head {
  height: 30px;
  margin: 19px 0 3px;
  padding: 0 21px 0 24px;
  display: flex;
  align-items: center;
  justify-content: space-between;
  font-size: 15px;
  color: #3c4043;
}
.labels { margin: 0; padding: 0; list-style: none; }
.label-row { height: 28.850px; display: flex; align-items: center; padding: 0 25px 0 23px; }
.label-row .ic18 { width: 18px; height: 18px; margin-right: 17px; }
.label-name { width: 126px; white-space: nowrap; overflow: hidden; text-overflow: ellipsis; }
.strong .label-name { font-weight: 700; letter-spacing: 0.25px; color: #202124; }
.count { margin-left: auto; font-size: 10.500px; color: #5f6368; }

/* Main card */
.card {
  width: 1640px;
  flex: none;
  margin-bottom: 14px;
  display: flex;
  flex-direction: column;
  background: #fff;
  border-radius: 16px;
}
.mail-tools { height: 42px; flex: none; display: flex; align-items: center; padding-left: 15px; }
.caret { width: 8px; height: 4px; margin-left: 5px; fill: #444746; }
.refresh { margin-left: 24px; }
.more { margin-left: 20px; }
.cat-tabs {
  height: 51px;
  flex: none;
  margin: 0 13px 0 8px;
  display: flex;
  border-bottom: 1px solid #e8eaed;
  font-size: 13.500px;
  color: #444746;
}
.cat { display: flex; align-items: center; height: 51px; }
.cat-primary {
  width: 211px;
  padding-left: 8px;
  gap: 15px;
  color: #0b57d0;
  font-weight: 500;
  border-bottom: 3px solid #0b57d0;
  border-radius: 0 0 2px 2px;
}
.cat-primary svg { fill: #0b57d0; margin-top: 3px; }
.cat-promo { width: 232px; padding-left: 23px; gap: 15px; }
.promo-top { display: flex; align-items: center; gap: 6px; height: 15px; }
.badge {
  height: 14px;
  padding: 0 5px;
  display: flex;
  align-items: center;
  background: #188038;
  border-radius: 7px;
  color: #fff;
  font-size: 10px;
  font-weight: 700;
}
.promo-sub { margin-top: 4px; font-size: 11px; color: #9aa0a6; white-space: nowrap; }
.promo-text { margin-bottom: 0; }
.cat-social { padding-left: 20px; gap: 15px; }
.social-text { margin-bottom: 2px; }
.empty { flex: 1; padding: 72px 0 0 566px; font-size: 12.900px; color: #5f6368; }
.empty-title { margin: 0; font-size: 14.500px; line-height: 20px; font-weight: 400; }
.empty-line { margin: 11px 0 0; line-height: 20px; }
.empty-line + .empty-line { margin-top: 11px; }
.empty-link { color: #1a56c4; }
.mail-foot { display: flex; margin-bottom: 160px; padding: 0 30px 0 15px; font-size: 10.900px; color: #5f6368; }
.foot-left { width: 715px; flex: none; padding-top: 4px; }
.storage-bar { width: 198px; height: 5px; background: #dadce0; border-radius: 3px; }
.storage-text { display: flex; align-items: center; gap: 9px; margin-top: 8px; height: 16px; }
.foot-center { padding-top: 1px; }
.foot-right { flex: 1; text-align: right; padding-top: 1px; }
.foot-details { margin-top: 5px; }

/* Right rail */
.rail { width: 50px; flex: none; display: flex; flex-direction: column; align-items: center; }
.rail-item { height: 50.500px; flex: none; display: flex; align-items: center; justify-content: center; }
.rail-ic { width: 17px; height: 17px; }
.rail-line { width: 18px; height: 1px; margin-top: 14px; background: #dadce0; flex: none; }
.rail-plus { width: 14px; height: 14px; margin-top: 32px; }
.rail-chevron { width: 18px; height: 18px; margin-top: auto; margin-bottom: 16px; fill: #1f1f1f; }

/* Windows taskbar */
.taskbar {
  height: 40px;
  flex: none;
  display: flex;
  align-items: stretch;
  background: #1e1e1e;
  color: #f0f0f0;
  font-family: "Open Sans", "Noto Sans", sans-serif;
}
.start { width: 48px; display: flex; align-items: center; justify-content: center; }
.win-logo { width: 16px; height: 16px; }
.tb-search {
  width: 287px;
  display: flex;
  align-items: center;
  padding-left: 11px;
  background: #333;
  border: 1px solid #5a5a5a;
  overflow: hidden;
  position: relative;
}
.tb-mag { width: 18px; height: 18px; }
.tb-search-text { margin-left: 11px; font-size: 13.900px; color: #d8d8d8; }
.tb-scene { position: absolute; right: 0; bottom: 0; width: 78px; height: 38px; }
.tb-item {
  width: 49px;
  flex: none;
  display: flex;
  align-items: center;
  justify-content: center;
  border-bottom: 2px solid transparent;
}
.tb-view { width: 51px; }
.tb-open { border-bottom-color: #a9a9a9; background-clip: padding-box; }
.tb-current { background: #4a4a4a; }
.tb-alert { background: #a35d2a; border-bottom-color: #f27a12; }
.tb-ic { width: 18px; height: 18px; }
.tb-big { width: 24px; height: 24px; }
.chrome {
  width: 24px;
  height: 24px;
  position: relative;
  border-radius: 50%;
  background: conic-gradient(from 30deg, #fbc02d 0 120deg, #43a047 120deg 240deg, #e53935 240deg 360deg);
  display: flex;
  align-items: center;
  justify-content: center;
}
.chrome-core { width: 11px; height: 11px; border-radius: 50%; background: #4285f4; border: 2px solid #fff; box-sizing: content-box; margin: -2px; }
.chip {
  position: absolute;
  right: -3px;
  bottom: -3px;
  width: 14px;
  height: 14px;
  border-radius: 50%;
  color: #fff;
  font-size: 8.500px;
  font-family: Roboto, sans-serif;
  display: flex;
  align-items: center;
  justify-content: center;
}
.chip-cam { background: radial-gradient(circle, #e53935 0 2px, #111 2.500px 4px, #c8d3e0 4.500px 5px, #223 5.500px); }
.chip-d { background: #e8417e; }
.chip-o { background: #0097a7; }
.chip-m { background: #e8510f; }
.chip-r { background: #a83a12; }
.chip-y { background: radial-gradient(circle, #6a3d1c 0 3px, #f5d96b 3.500px); }
.tg { position: relative; }
.tg-badge {
  position: absolute;
  right: -5px;
  bottom: -4px;
  width: 15px;
  height: 15px;
  border-radius: 50%;
  background: #e8352f;
  color: #fff;
  font-size: 10.500px;
  display: flex;
  align-items: center;
  justify-content: center;
}
.tray { margin-left: auto; display: flex; align-items: center; font-size: 12px; }
.tray-ic { width: 17px; height: 17px; margin-right: 7px; }
.tray-lang { margin-left: 2px; width: 29px; }
.tray-clock { width: 68px; text-align: center; line-height: 18px; }
.tray-note { width: 42px; position: relative; display: flex; justify-content: center; margin-top: -4px; }
.note-ic { width: 16px; height: 14px; }
.note-count {
  position: absolute;
  left: 22px;
  top: 4px;
  width: 15px;
  height: 15px;
  border-radius: 50%;
  background: #3c3c3c;
  border: 1px solid #ddd;
  font-size: 9.500px;
  display: flex;
  align-items: center;
  justify-content: center;
}
.show-desk { width: 5px; height: 40px; border-left: 1px solid #555; margin-left: 4px; }
```
